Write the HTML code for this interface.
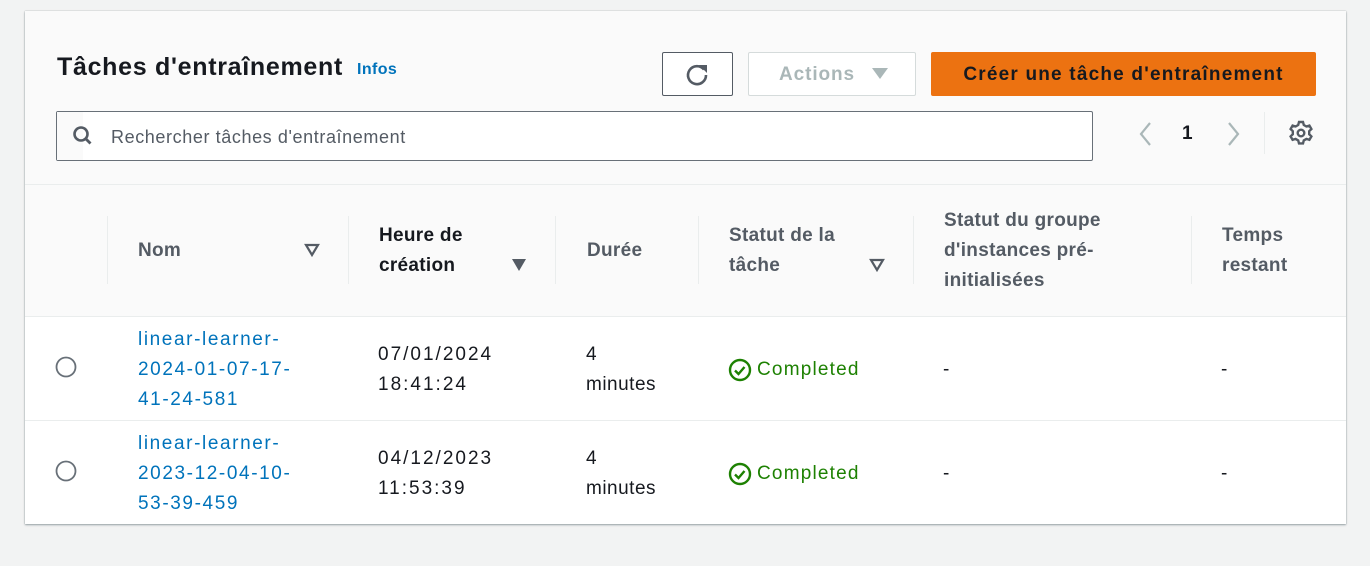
<!DOCTYPE html>
<html><head><meta charset="utf-8"><style>
body{margin:0;width:1370px;height:566px;background:#f2f3f3;font-family:"Liberation Sans",sans-serif;position:relative;overflow:hidden}
.card{position:absolute;left:25px;top:11px;width:1321px;height:513px;background:#fff;box-shadow:0 1px 2px rgba(0,28,36,.35),0 0 1px rgba(0,28,36,.3)}
.t{position:absolute;white-space:nowrap;line-height:30px}
.h{font-weight:bold;color:#545b64;font-size:19px;letter-spacing:.3px}
.lnk{color:#0073bb;font-size:19px;letter-spacing:1.6px}
.d{color:#16191f;font-size:19px;letter-spacing:2px}
.sep{position:absolute;width:1px;background:#eaeded;top:216px;height:68px}
</style></head><body>
<div class="card">
 <div style="position:absolute;left:0;top:0;width:1321px;height:305px;background:#fafafa"></div>
 <div style="position:absolute;left:0;top:173px;width:1321px;height:1px;background:#eaeded"></div>
 <div style="position:absolute;left:0;top:305px;width:1321px;height:1px;background:#eaeded"></div>
 <div style="position:absolute;left:0;top:409px;width:1321px;height:1px;background:#eaeded"></div>
</div>
<div class="t" style="left:57px;top:52px;font-size:25px;font-weight:bold;color:#16191f;letter-spacing:.7px">Tâches d'entraînement</div>
<div class="t" style="left:357px;top:55px;font-size:16px;font-weight:bold;color:#0073bb;letter-spacing:.4px">Infos</div>
<div style="position:absolute;left:662px;top:52px;width:69px;height:42px;border:1px solid #545b64;border-radius:2px;background:#fff"></div>
<svg style="position:absolute;left:684px;top:61px" width="26" height="26" viewBox="0 0 26 26"><path d="M20 8.5A9 9 0 1 0 22 14" fill="none" stroke="#545b64" stroke-width="2.6"/><path d="M15 4h8v8z" fill="#545b64"/></svg>
<div style="position:absolute;left:748px;top:52px;width:166px;height:42px;border:1px solid #d5dbdb;border-radius:2px;background:#fff"></div>
<div class="t" style="left:779px;top:60px;font-size:19px;font-weight:bold;color:#aab7b8;letter-spacing:.9px">Actions</div>
<svg style="position:absolute;left:872px;top:68px" width="16" height="12"><path d="M0 0h16L8 11z" fill="#aab7b8"/></svg>
<div style="position:absolute;left:931px;top:52px;width:385px;height:44px;background:#ec7211;border-radius:2px"></div>
<div class="t" style="left:931px;top:60px;width:385px;text-align:center;font-size:19px;font-weight:bold;color:#16191f;letter-spacing:1.2px">Créer une tâche d'entraînement</div>
<div style="position:absolute;left:56px;top:111px;width:1035px;height:48px;border:1px solid #687078;border-radius:2px;background:#fff"></div>
<div style="position:absolute;left:57px;top:112px;width:26px;height:48px;background:#fafafa"></div>
<svg style="position:absolute;left:71px;top:124px" width="24" height="24"><circle cx="10" cy="10" r="6.5" fill="none" stroke="#545b64" stroke-width="2.6"/><path d="M14.5 14.5l5 5" stroke="#545b64" stroke-width="2.8"/></svg>
<div class="t" style="left:111px;top:122px;font-size:18px;color:#545b64;letter-spacing:.6px">Rechercher tâches d'entraînement</div>
<svg style="position:absolute;left:1136px;top:121px" width="20" height="26"><path d="M14 2L5 13l9 11" fill="none" stroke="#aab7b8" stroke-width="2.2"/></svg>
<div class="t" style="left:1182px;top:119px;font-size:19px;font-weight:bold;color:#16191f">1</div>
<svg style="position:absolute;left:1224px;top:121px" width="20" height="26"><path d="M5 2l9 11-9 11" fill="none" stroke="#aab7b8" stroke-width="2.2"/></svg>
<div style="position:absolute;left:1264px;top:112px;width:1px;height:42px;background:#eaeded"></div>
<svg style="position:absolute;left:1288px;top:120px" width="26" height="26" viewBox="0 0 26 26"><g fill="none" stroke="#545b64" stroke-width="2.4"><path d="M11 2h4l.8 3 2.6 1.5 3-.9 2 3.4-2.2 2.2v3l2.2 2.2-2 3.4-3-.9-2.6 1.5-.8 3h-4l-.8-3-2.6-1.5-3 .9-2-3.4 2.2-2.2v-3L2.6 9l2-3.4 3 .9L10.2 5z"/><circle cx="13" cy="13" r="3.3"/></g></svg>

<div class="sep" style="left:107px"></div>
<div class="sep" style="left:348px"></div>
<div class="sep" style="left:555px"></div>
<div class="sep" style="left:698px"></div>
<div class="sep" style="left:913px"></div>
<div class="sep" style="left:1191px"></div>
<div class="t h" style="left:138px;top:236px">Nom</div>
<svg style="position:absolute;left:304px;top:243px" width="16" height="14"><path d="M2 2h12L8 12z" fill="none" stroke="#545b64" stroke-width="2.2"/></svg>
<div class="t h" style="left:379px;top:221px;color:#16191f">Heure de<br>création</div>
<svg style="position:absolute;left:511px;top:258px" width="16" height="14"><path d="M1 1h14L8 13z" fill="#545b64"/></svg>
<div class="t h" style="left:587px;top:236px">Durée</div>
<div class="t h" style="left:729px;top:221px">Statut de la<br>tâche</div>
<svg style="position:absolute;left:869px;top:258px" width="16" height="14"><path d="M2 2h12L8 12z" fill="none" stroke="#545b64" stroke-width="2.2"/></svg>
<div class="t h" style="left:944px;top:206px">Statut du groupe<br>d'instances pré-<br>initialisées</div>
<div class="t h" style="left:1222px;top:221px">Temps<br>restant</div>

<svg style="position:absolute;left:55px;top:356px" width="22" height="22"><circle cx="11" cy="11" r="9.5" fill="#fff" stroke="#687078" stroke-width="1.8"/></svg>
<div class="t lnk" style="left:138px;top:325px">linear-learner-<br>2024-01-07-17-<br>41-24-581</div>
<div class="t d" style="left:378px;top:340px">07/01/2024<br>18:41:24</div>
<div class="t d" style="left:586px;top:340px;letter-spacing:.5px">4<br>minutes</div>
<svg style="position:absolute;left:728px;top:358px" width="24" height="24"><circle cx="12" cy="12" r="10" fill="none" stroke="#1d8102" stroke-width="2.4"/><path d="M7 12.5l3.5 3.5 6-7" fill="none" stroke="#1d8102" stroke-width="2.4"/></svg>
<div class="t" style="left:757px;top:355px;font-size:19px;color:#1d8102;letter-spacing:1.2px">Completed</div>
<div class="t d" style="left:943px;top:355px">-</div>
<div class="t d" style="left:1221px;top:355px">-</div>

<svg style="position:absolute;left:55px;top:460px" width="22" height="22"><circle cx="11" cy="11" r="9.5" fill="#fff" stroke="#687078" stroke-width="1.8"/></svg>
<div class="t lnk" style="left:138px;top:429px">linear-learner-<br>2023-12-04-10-<br>53-39-459</div>
<div class="t d" style="left:378px;top:444px">04/12/2023<br>11:53:39</div>
<div class="t d" style="left:586px;top:444px;letter-spacing:.5px">4<br>minutes</div>
<svg style="position:absolute;left:728px;top:462px" width="24" height="24"><circle cx="12" cy="12" r="10" fill="none" stroke="#1d8102" stroke-width="2.4"/><path d="M7 12.5l3.5 3.5 6-7" fill="none" stroke="#1d8102" stroke-width="2.4"/></svg>
<div class="t" style="left:757px;top:459px;font-size:19px;color:#1d8102;letter-spacing:1.2px">Completed</div>
<div class="t d" style="left:943px;top:459px">-</div>
<div class="t d" style="left:1221px;top:459px">-</div>
</body></html>
